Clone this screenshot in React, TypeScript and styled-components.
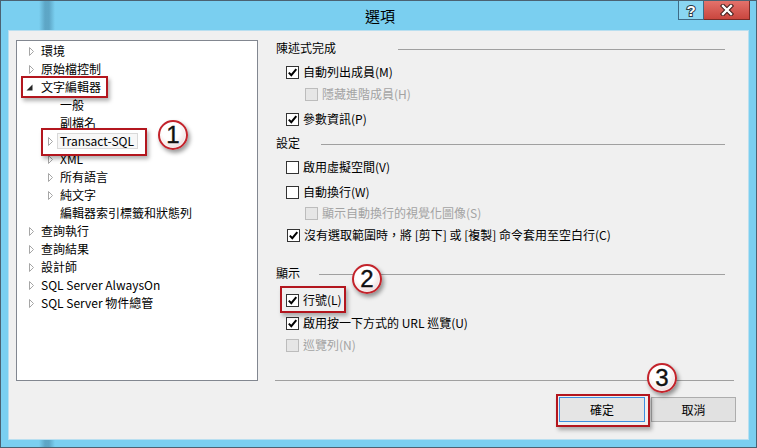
import React from 'react';
import styled, { createGlobalStyle } from 'styled-components';

const GlobalStyle = createGlobalStyle`
    html, body {
        margin: 0;
        padding: 0;
        background: #7acff0;
    }
    body {
        font-family: "Noto Sans CJK TC", "Noto Sans", sans-serif;
        font-size: 12px;
        color: #000;
    }
`;

const Window = styled.div`
    position: relative;
    width: 757px;
    height: 448px;
    box-sizing: border-box;
    border: 1px solid #4b6272;
    background:
        linear-gradient(to right, transparent 38px, rgba(40, 90, 120, 0.35) 44px, rgba(40, 90, 120, 0.35) 48px, transparent 54px),
        #7acff0;
    display: flex;
    flex-direction: column;
    overflow: hidden;
`;

const TitleBar = styled.div`
    position: relative;
    height: 29px;
    flex: 0 0 29px;
    display: flex;
    align-items: center;
    justify-content: center;
`;

const Title = styled.div`
    font-size: 15px;
    line-height: 20px;
    margin-left: 3px;
    margin-top: 1px;
`;

const CaptionButtons = styled.div`
    position: absolute;
    top: -1px;
    right: 6px;
    display: flex;
`;

const CaptionButton = styled.div<{ $close?: boolean }>`
    width: ${(p) => (p.$close ? 46 : 26)}px;
    height: 20px;
    box-sizing: border-box;
    border: 1px solid ${(p) => (p.$close ? '#7b2c27' : '#3e6b86')};
    border-left-width: ${(p) => (p.$close ? 0 : 1)}px;
    background: ${(p) => (p.$close ? 'linear-gradient(#e4726b, #c9463e)' : '#8ad6f2')};
    display: flex;
    align-items: center;
    justify-content: center;
`;

const Client = styled.div`
    margin: 0 7px;
    height: 410px;
    box-sizing: border-box;
    border: 1px solid #b9dff0;
    background: #f0f0f0;
    padding: 7px 12px 0 7px;
    display: flex;
    gap: 17px;
`;

const TreePanel = styled.div`
    margin-top: 2px;
    width: 242px;
    height: 341px;
    box-sizing: border-box;
    border: 1px solid #828790;
    background: #fff;
    padding-top: 1px;
`;

const TreeRow = styled.div<{ $level: number }>`
    height: 18px;
    display: flex;
    align-items: center;
    padding-left: ${(p) => 11 + p.$level * 19}px;
    white-space: nowrap;
`;

const ArrowSlot = styled.span`
    width: 13px;
    height: 18px;
    flex: 0 0 13px;
    display: flex;
    align-items: center;
`;

const TreeLabel = styled.span<{ $selected?: boolean }>`
    line-height: 16px;
    height: 16px;
    box-sizing: border-box;
    ${(p) =>
        p.$selected &&
        `
        margin-left: -3px;
        padding: 0 3px 0 2px;
        border: 1px solid #d9d9d9;
        background: #f7f7f7;
        line-height: 14px;
    `}
`;

const RightColumn = styled.div`
    width: 461px;
    display: flex;
    flex-direction: column;
`;

const OptionsPanel = styled.div`
    width: 450px;
    box-sizing: border-box;
    padding-left: 1px;
    display: flex;
    flex-direction: column;
`;

const GroupHeader = styled.div<{ $lineFrom: number; $gap: number }>`
    height: 20px;
    margin-top: ${(p) => p.$gap}px;
    display: grid;
    grid-template-columns: ${(p) => p.$lineFrom}px 1fr;
    align-items: center;
    line-height: 20px;
`;

const HeaderLine = styled.div`
    height: 1px;
    margin-top: 2px;
    background: #a0a0a0;
`;

const OptionRow = styled.div<{ $indent: number; $gap: number; $disabled?: boolean }>`
    height: 20px;
    margin-top: ${(p) => p.$gap}px;
    padding-left: ${(p) => p.$indent}px;
    display: flex;
    align-items: center;
    gap: 4px;
    color: ${(p) => (p.$disabled ? '#a3a3a3' : '#000')};
    white-space: nowrap;
    line-height: 20px;
`;

const CheckBox = styled.span<{ $disabled?: boolean }>`
    width: 13px;
    height: 13px;
    flex: 0 0 13px;
    box-sizing: border-box;
    border: 1px solid ${(p) => (p.$disabled ? '#bcbcbc' : '#333')};
    background: ${(p) => (p.$disabled ? '#e6e6e6' : '#fff')};
    display: flex;
    align-items: center;
    justify-content: center;
`;

const Separator = styled.div`
    margin-top: 25px;
    width: 459px;
    height: 1px;
    background: #a0a0a0;
`;

const ButtonRow = styled.div`
    margin-top: 16px;
    display: flex;
    justify-content: flex-end;
    gap: 6px;
`;

const DialogButton = styled.div<{ $default?: boolean; $width: number }>`
    width: ${(p) => p.$width}px;
    height: 25px;
    box-sizing: border-box;
    border: 1px solid ${(p) => (p.$default ? '#3c8fe0' : '#adadad')};
    background: ${(p) => (p.$default ? '#e5e5e5' : '#e1e1e1')};
    display: flex;
    align-items: center;
    justify-content: center;
    line-height: 20px;
`;

const RedBox = styled.div<{ $x: number; $y: number; $w: number; $h: number }>`
    position: absolute;
    left: ${(p) => p.$x}px;
    top: ${(p) => p.$y}px;
    width: ${(p) => p.$w}px;
    height: ${(p) => p.$h}px;
    box-sizing: border-box;
    border: 2px solid #b3161e;
    box-shadow: 2px 3px 4px rgba(0, 0, 0, 0.3);
    pointer-events: none;
`;

const Marker = styled.div<{ $x: number; $y: number }>`
    position: absolute;
    left: ${(p) => p.$x - 15}px;
    top: ${(p) => p.$y - 15}px;
    width: 30px;
    height: 30px;
    box-sizing: border-box;
    border-radius: 50%;
    border: 2.5px solid #c3232b;
    background: radial-gradient(circle at 42% 36%, #ffffff 40%, #f1e4e4 68%, #d6a9ab 100%);
    box-shadow: 2px 3px 4px rgba(0, 0, 0, 0.4), inset 0 0 0 1px rgba(255, 255, 255, 0.6);
    display: flex;
    align-items: center;
    justify-content: center;
    font-family: "Liberation Sans", sans-serif;
    font-size: 24px;
    line-height: 26px;
    color: #111;
    -webkit-text-stroke: 0.4px #111;
`;

function Arrow(props: { open?: boolean }) {
    return (
        <ArrowSlot>
            <svg width="13" height="9" viewBox="0 0 13 9" style={{ overflow: 'visible' }}>
                {props.open ? (
                    <polygon points="4.5,1.5 4.5,7.5 -1.5,7.5" fill="#262626" />
                ) : (
                    <polygon points="1.5,0.5 5.5,4.5 1.5,8.5" fill="none" stroke="#a6a6a6" strokeWidth="1" />
                )}
            </svg>
        </ArrowSlot>
    );
}

function Check(props: { checked?: boolean; disabled?: boolean }) {
    return (
        <CheckBox $disabled={props.disabled}>
            {props.checked && (
                <svg width="11" height="11" viewBox="0 0 11 11">
                    <path d="M1.8 5.6 L4.3 8.2 L9.3 2.2" fill="none" stroke="#000" strokeWidth="2" />
                </svg>
            )}
        </CheckBox>
    );
}

const treeItems: { label: string; level: number; arrow?: 'open' | 'closed'; selected?: boolean }[] = [
    { label: '環境', level: 0, arrow: 'closed' },
    { label: '原始檔控制', level: 0, arrow: 'closed' },
    { label: '文字編輯器', level: 0, arrow: 'open' },
    { label: '一般', level: 1 },
    { label: '副檔名', level: 1 },
    { label: 'Transact-SQL', level: 1, arrow: 'closed', selected: true },
    { label: 'XML', level: 1, arrow: 'closed' },
    { label: '所有語言', level: 1, arrow: 'closed' },
    { label: '純文字', level: 1, arrow: 'closed' },
    { label: '編輯器索引標籤和狀態列', level: 1 },
    { label: '查詢執行', level: 0, arrow: 'closed' },
    { label: '查詢結果', level: 0, arrow: 'closed' },
    { label: '設計師', level: 0, arrow: 'closed' },
    { label: 'SQL Server AlwaysOn', level: 0, arrow: 'closed' },
    { label: 'SQL Server 物件總管', level: 0, arrow: 'closed' },
];

type Option =
    | { kind: 'header'; label: string; lineFrom: number; gap: number }
    | { kind: 'option'; label: string; checked?: boolean; disabled?: boolean; indent: number; gap: number };

const options: Option[] = [
    { kind: 'header', label: '陳述式完成', lineFrom: 122, gap: 0 },
    { kind: 'option', label: '自動列出成員(M)', checked: true, indent: 10, gap: 4 },
    { kind: 'option', label: '隱藏進階成員(H)', disabled: true, indent: 29, gap: 2 },
    { kind: 'option', label: '參數資訊(P)', checked: true, indent: 10, gap: 5 },
    { kind: 'header', label: '設定', lineFrom: 45, gap: 4 },
    { kind: 'option', label: '啟用虛擬空間(V)', indent: 10, gap: 4 },
    { kind: 'option', label: '自動換行(W)', indent: 10, gap: 5 },
    { kind: 'option', label: '顯示自動換行的視覺化圖像(S)', disabled: true, indent: 29, gap: 1 },
    { kind: 'option', label: '沒有選取範圍時，將 [剪下] 或 [複製] 命令套用至空白行(C)', checked: true, indent: 11, gap: 2 },
    { kind: 'header', label: '顯示', lineFrom: 43, gap: 18 },
    { kind: 'option', label: '行號(L)', checked: true, indent: 10, gap: 7 },
    { kind: 'option', label: '啟用按一下方式的 URL 巡覽(U)', checked: true, indent: 10, gap: 3 },
    { kind: 'option', label: '巡覽列(N)', disabled: true, indent: 10, gap: 2 },
];

export default function App() {
    return (
        <>
            <GlobalStyle />
            <Window>
                <TitleBar>
                    <Title>選項</Title>
                    <CaptionButtons>
                        <CaptionButton>
                            <svg width="14" height="16" viewBox="0 0 14 16">
                                <text
                                    x="7"
                                    y="13.5"
                                    textAnchor="middle"
                                    fontFamily="Liberation Sans, sans-serif"
                                    fontWeight="bold"
                                    fontSize="15"
                                    fill="#fff"
                                    stroke="#2b3b47"
                                    strokeWidth="2"
                                    paintOrder="stroke"
                                >
                                    ?
                                </text>
                            </svg>
                        </CaptionButton>
                        <CaptionButton $close>
                            <svg width="14" height="12" viewBox="0 0 14 12">
                                <path d="M3 2 L11 10 M11 2 L3 10" stroke="#3a1a18" strokeWidth="4.4" strokeLinecap="square" />
                                <path d="M3 2 L11 10 M11 2 L3 10" stroke="#fff" strokeWidth="2.4" strokeLinecap="square" />
                            </svg>
                        </CaptionButton>
                    </CaptionButtons>
                </TitleBar>
                <Client>
                    <TreePanel>
                        {treeItems.map((item) => (
                            <TreeRow key={item.label} $level={item.level}>
                                {item.arrow ? <Arrow open={item.arrow === 'open'} /> : <ArrowSlot />}
                                <TreeLabel $selected={item.selected}>{item.label}</TreeLabel>
                            </TreeRow>
                        ))}
                    </TreePanel>
                    <RightColumn>
                        <OptionsPanel>
                            {options.map((o) =>
                                o.kind === 'header' ? (
                                    <GroupHeader key={o.label} $lineFrom={o.lineFrom} $gap={o.gap}>
                                        <span>{o.label}</span>
                                        <HeaderLine />
                                    </GroupHeader>
                                ) : (
                                    <OptionRow key={o.label} $indent={o.indent} $gap={o.gap} $disabled={o.disabled}>
                                        <Check checked={o.checked} disabled={o.disabled} />
                                        <span>{o.label}</span>
                                    </OptionRow>
                                )
                            )}
                        </OptionsPanel>
                        <Separator />
                        <ButtonRow>
                            <DialogButton $default $width={86}>確定</DialogButton>
                            <DialogButton $width={85}>取消</DialogButton>
                        </ButtonRow>
                    </RightColumn>
                </Client>

                <RedBox $x={20} $y={75} $w={87} $h={22} />
                <RedBox $x={40} $y={127} $w={106} $h={28} />
                <RedBox $x={279} $y={285} $w={66} $h={27} />
                <RedBox $x={555} $y={393} $w={94} $h={33} />
                <Marker $x={172} $y={134}>1</Marker>
                <Marker $x={366} $y={278}>2</Marker>
                <Marker $x={661} $y={377}>3</Marker>
            </Window>
        </>
    );
}
